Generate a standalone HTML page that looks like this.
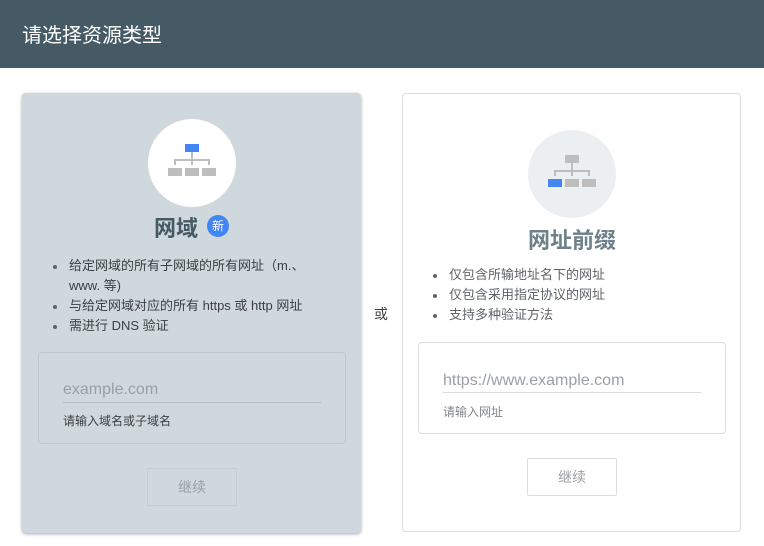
<!DOCTYPE html><html><head><meta charset="utf-8"><style>
*{margin:0;padding:0;box-sizing:border-box}
body{width:764px;height:546px;background:#fff;font-family:"Liberation Sans","Noto Sans CJK SC",sans-serif;position:relative;overflow:hidden}
.hd{position:absolute;left:0;top:0;width:764px;height:68px;background:#455a64;color:#fff;font-size:20px;padding:24px 0 0 22px;line-height:24px}
.a{position:absolute}
.card{position:absolute;top:93px;width:339px;border-radius:4px}
.l{left:22px;height:440px;background:#cfd8dc;box-shadow:0 1px 3px rgba(0,0,0,.35)}
.r{left:402px;height:439px;background:#fff;border:1px solid #dadce0}
.circ{position:absolute;width:88px;height:88px;border-radius:50%}
ul{position:absolute;font-size:13px;color:#3c4043;list-style:none}
li{position:relative;padding-left:16px;line-height:20px}
li:before{content:"";position:absolute;left:0;top:9px;width:4px;height:4px;border-radius:50%;background:#5f6368}
.box{position:absolute;border:1px solid #bfc6c9;border-radius:4px}
.ph{position:absolute;font-size:16px;color:#9aa0a6}
.ln{position:absolute;height:1px;background:#b9bec1}
.hp{position:absolute;font-size:12px;color:#5f6368}
.btn{position:absolute;border:1px solid #c7ccce;border-radius:2px;font-size:14px;color:#9aa0a6;text-align:center}
</style></head><body>
<div class="hd">请选择资源类型</div>
<div class="card l">
 <div class="circ" style="left:126px;top:26px;background:#fff"></div>
 <svg class="a" style="left:144px;top:48px" width="52" height="40"><rect x="19" y="3" width="14" height="8" fill="#4285f4"/><path d="M26 11v8M9 24v-5h34v5M26 19v5" stroke="#bdbdbd" stroke-width="2" fill="none"/><rect x="2" y="27" width="14" height="8" fill="#bdbdbd"/><rect x="19" y="27" width="14" height="8" fill="#bdbdbd"/><rect x="36" y="27" width="14" height="8" fill="#bdbdbd"/></svg>
 <div class="a" style="left:132px;top:118px;font-size:22px;font-weight:bold;color:#455a64">网域</div>
 <div class="a" style="left:185px;top:122px;width:22px;height:22px;border-radius:50%;background:#4285f4;color:#fff;font-size:12px;text-align:center;line-height:22px">新</div>
 <ul style="left:31px;top:163px;width:272px;color:#3c4043"><li>给定网域的所有子网域的所有网址（m.、www. 等)</li><li>与给定网域对应的所有 https 或 http 网址</li><li>需进行 DNS 验证</li></ul>
 <div class="box" style="left:16px;top:259px;width:308px;height:92px"></div>
 <div class="ph" style="left:41px;top:288px">example.com</div>
 <div class="ln" style="left:41px;top:309px;width:258px"></div>
 <div class="hp" style="left:41px;top:319px;color:#3c4043">请输入域名或子域名</div>
 <div class="btn" style="left:125px;top:375px;width:90px;height:38px;line-height:36px">继续</div>
</div>
<div class="a" style="left:374px;top:304px;font-size:14px;color:#3c4043">或</div>
<div class="card r">
 <div class="circ" style="left:125px;top:36px;background:#eceff1"></div>
 <svg class="a" style="left:143px;top:58px" width="52" height="40"><rect x="19" y="3" width="14" height="8" fill="#bdbdbd"/><path d="M26 11v8M9 24v-5h34v5M26 19v5" stroke="#bdbdbd" stroke-width="2" fill="none"/><rect x="2" y="27" width="14" height="8" fill="#4285f4"/><rect x="19" y="27" width="14" height="8" fill="#bdbdbd"/><rect x="36" y="27" width="14" height="8" fill="#bdbdbd"/></svg>
 <div class="a" style="left:125px;top:129px;font-size:22px;font-weight:bold;color:#6e8089">网址前缀</div>
 <ul style="left:30px;top:171px;width:290px;color:#5f6368"><li>仅包含所输地址名下的网址</li><li>仅包含采用指定协议的网址</li><li>支持多种验证方法</li></ul>
 <div class="box" style="left:15px;top:248px;width:308px;height:92px;border-color:#dadce0"></div>
 <div class="ph" style="left:40px;top:278px">https://www.example.com</div>
 <div class="ln" style="left:40px;top:298px;width:258px;background:#dadce0"></div>
 <div class="hp" style="left:40px;top:309px;color:#80868b">请输入网址</div>
 <div class="btn" style="left:124px;top:364px;width:90px;height:38px;line-height:36px;border-color:#dadce0">继续</div>
</div>
</body></html>
